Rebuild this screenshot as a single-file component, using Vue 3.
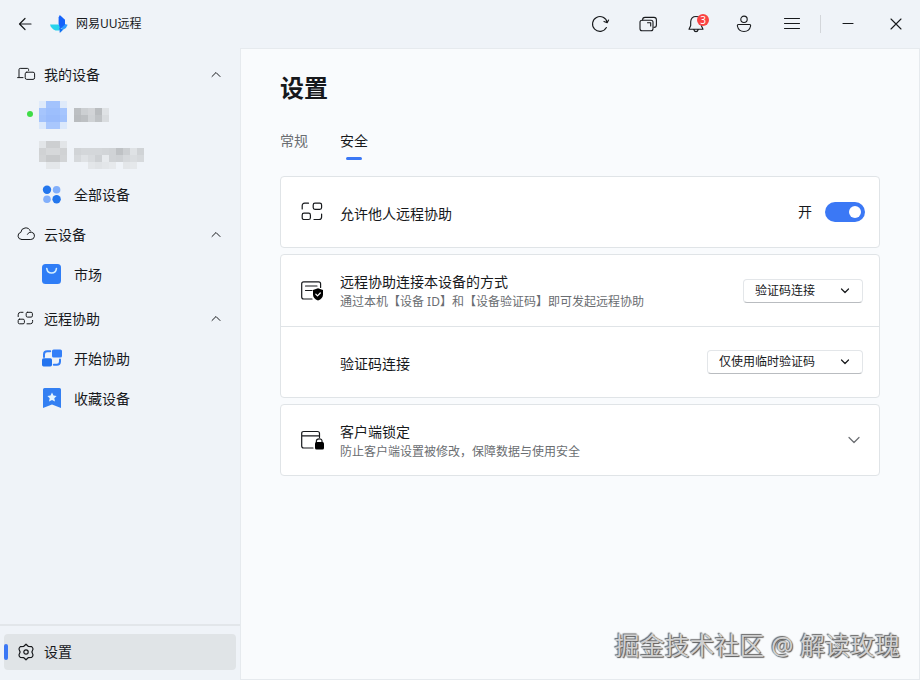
<template>
  <div class="app">
    <header class="titlebar">
      <button class="icon-btn back" aria-label="返回">
        <svg width="16" height="16" viewBox="0 0 16 16"><path d="M14 8H2.5M8 2.5L2.5 8L8 13.5" /></svg>
      </button>
      <svg class="logo" width="18" height="18" viewBox="0 0 18 18">
        <path d="M0 9.4L8.5 9.6L11 13L8.8 15.4H5.5Q1 13.5 0 9.4Z" fill="#27d3ec" />
        <path d="M13 8.5L17.6 9.8Q16.6 13.4 13.5 14.6L10.5 13Z" fill="#2f9bff" />
        <path d="M9.8 0L15 4.8V9.5L10.2 14L8.6 9V2.5Z" fill="#1562fa" />
        <path d="M9.2 13L13.4 14.4L9.8 18Z" fill="#1273f2" />
      </svg>
      <span class="app-name">网易UU远程</span>
      <div class="actions">
        <button class="icon-btn" aria-label="刷新">
          <svg width="20" height="20" viewBox="0 0 20 20"><path d="M16.4 13.6A7.4 7.4 0 1 1 17.2 8.6M14 7.4L17.2 8.8L18.6 6" /></svg>
        </button>
        <button class="icon-btn" aria-label="窗口">
          <svg width="20" height="20" viewBox="0 0 20 20">
            <rect x="2" y="6.3" width="13" height="10.5" rx="2" />
            <path d="M4.6 5.9Q4.6 3.4 7 3.4H16Q18.4 3.4 18.4 5.8V11Q18.4 13.4 16 13.4M9.5 8.8H12.7V12" />
          </svg>
        </button>
        <button class="icon-btn" aria-label="通知">
          <svg width="20" height="20" viewBox="0 0 20 20"><path d="M4.7 9V7.8Q5 2.5 10 2.5T15.3 7.8V11.5L17 15.3H3L4.7 11.5ZM7.8 15.5Q8.3 17.6 10 17.6T12.2 15.5" /></svg>
          <span class="badge">3</span>
        </button>
        <button class="icon-btn" aria-label="账号">
          <svg width="20" height="20" viewBox="0 0 20 20">
            <circle cx="10" cy="5.3" r="3.2" />
            <path d="M4.5 10.5H15.5Q16.8 10.5 16.6 12Q15.5 17.5 10 17.5T3.4 12Q3.2 10.5 4.5 10.5Z" />
          </svg>
        </button>
        <button class="icon-btn" aria-label="菜单">
          <svg width="20" height="20" viewBox="0 0 20 20"><path d="M2.5 4.5H17.5M2.5 9.5H17.5M2.5 14.5H17.5" /></svg>
        </button>
        <span class="split"></span>
        <button class="icon-btn" aria-label="最小化">
          <svg width="20" height="20" viewBox="0 0 20 20"><path d="M5 9.5H15" /></svg>
        </button>
        <button class="icon-btn" aria-label="关闭">
          <svg width="20" height="20" viewBox="0 0 20 20"><path d="M5 5L15 15M15 5L5 15" /></svg>
        </button>
      </div>
    </header>

    <div class="body">
      <aside class="sidebar">
        <nav>
          <section v-for="group in groups" :key="group.name" class="group">
            <button class="group-head">
              <svg v-if="group.icon === 'devices'" width="20" height="20" viewBox="0 0 20 20">
                <path d="M1.6 12.6H7M3 12V4.6Q3 3.4 4.2 3.4H11.4Q12.6 3.4 12.6 4.6V5.4" />
                <rect x="9.2" y="7.2" width="9.4" height="7.2" rx="1.6" />
              </svg>
              <svg v-else-if="group.icon === 'cloud'" width="20" height="20" viewBox="0 0 20 20">
                <path d="M5.5 14.5H14.8A3.7 3.7 0 1 0 11.4 9.3M5.5 14.5A3.6 3.6 0 0 1 4.8 7.4A5 5 0 0 1 14.4 6" />
              </svg>
              <svg v-else width="20" height="20" viewBox="0 0 20 20">
                <path d="M2.2 7.6V5.7Q2.2 3.3 4.6 3.3H7M16.6 11.4V12.6Q16.6 14.8 14.4 14.8H11" />
                <rect x="10.2" y="3.3" width="6.2" height="4.8" rx="1.3" />
                <rect x="2.2" y="10.2" width="6.2" height="4.6" rx="1.3" />
              </svg>
              <span>{{ group.name }}</span>
              <svg class="chevron" width="10" height="10" viewBox="0 0 10 10"><path d="M1 6.5L5 2.5L9 6.5" /></svg>
            </button>
            <a v-for="item in group.items" :key="item.icon" class="item" href="#">
              <i v-if="item.online" class="online"></i>
              <svg v-if="item.avatar" class="mosaic" width="28" height="28">
                <rect v-for="c in cells(item.avatar)" :key="c.key" :x="c.x" :y="c.y" width="7" height="7" :fill="c.fill" />
              </svg>
              <svg v-else-if="item.icon === 'all'" width="20" height="20" viewBox="0 0 20 20">
                <circle cx="5" cy="4.8" r="4.2" fill="#2376ed" />
                <circle cx="14.6" cy="4.8" r="3.8" fill="#82affb" />
                <circle cx="5" cy="14.2" r="3.8" fill="#82affb" />
                <circle cx="14.6" cy="14.2" r="4.2" fill="#2376ed" />
              </svg>
              <svg v-else-if="item.icon === 'market'" width="20" height="20" viewBox="0 0 20 20">
                <rect x="0" y="-1" width="19" height="20" rx="3.5" fill="#2f7df6" />
                <path class="smile" d="M4.8 3.5Q5.3 8 9.6 8T14.4 3.5" />
              </svg>
              <svg v-else-if="item.icon === 'assist'" width="20" height="20" viewBox="0 0 20 20">
                <rect x="10" y="0.5" width="10" height="8" rx="1.6" fill="#347ff7" />
                <rect x="0" y="9.2" width="10" height="8.2" rx="1.6" fill="#2474ef" />
                <path class="line" d="M2 8V5.4Q2 2.2 5.2 2.2H8.2M18 10.4V12.6Q18 15.8 14.8 15.8H11.8" />
              </svg>
              <svg v-else width="20" height="20" viewBox="0 0 20 20">
                <path d="M1 0.5Q1 -1 2.5 -1H17.5Q19 -1 19 0.5V19L10 15.5L1 19Z" fill="#337ff2" />
                <path d="M10 3.5L11.5 6.5L14.6 7L12.3 9.2L13 12.5L10 10.9L7 12.5L7.7 9.2L5.4 7L8.5 6.5Z" fill="#e3f5ff" />
              </svg>
              <svg v-if="item.mask" :width="item.mask[0].length * 7" :height="item.mask.length * 7">
                <rect v-for="c in cells(item.mask)" :key="c.key" :x="c.x" :y="c.y" width="7" height="7" :fill="c.fill" />
              </svg>
              <span v-else>{{ item.name }}</span>
            </a>
          </section>
        </nav>
        <div class="side-foot">
          <a class="settings" href="#">
            <svg width="18" height="18" viewBox="0 0 18 18">
              <path d="M9 1.2L11.2 3.3L14.7 3.6Q16 4.7 16 6.1L14.9 9L16 11.9Q16 13.3 14.7 14.4L11.2 14.7L9 16.8L6.8 14.7L3.3 14.4Q2 13.3 2 11.9L3.1 9L2 6.1Q2 4.7 3.3 3.6L6.8 3.3Z" />
              <circle cx="9" cy="9" r="2.2" />
            </svg>
            <span>设置</span>
          </a>
        </div>
      </aside>

      <main class="main">
        <h1>设置</h1>
        <div class="tabs">
          <button v-for="t in tabs" :key="t" class="tab" :class="{ active: t === tab }" @click="tab = t">{{ t }}</button>
        </div>

        <div class="card">
          <div class="row switch-row">
            <svg width="24" height="24" viewBox="0 0 24 24">
              <path d="M2.2 9V5.7Q2.2 3.2 4.7 3.2H8.5M21.6 14V17Q21.6 19.5 19.1 19.5H14" />
              <rect x="13.2" y="3.2" width="8.4" height="6.2" rx="1.8" />
              <rect x="2.2" y="13.2" width="8.2" height="6.3" rx="1.8" />
            </svg>
            <label class="text" for="allow">允许他人远程协助</label>
            <span class="state">{{ allow ? '开' : '关' }}</span>
            <input id="allow" v-model="allow" class="switch" type="checkbox" role="switch">
          </div>
        </div>

        <div class="card">
          <div class="row divided">
            <svg width="24" height="24" viewBox="0 0 24 24">
              <path d="M12 20H3.7Q1.7 20 1.7 18V4.8Q1.7 2.8 3.7 2.8H18.6Q20.6 2.8 20.6 4.8V8.5M5.5 7H17M5.5 11.5H12" />
              <path class="solid" d="M18 9.2L23 11V15.5Q23 19.5 18 21.6Q13 19.5 13 15.5V11Z" />
              <path class="check" d="M15.8 15.2L17.5 16.9L20.3 14" />
            </svg>
            <div class="text">
              <label for="mode">远程协助连接本设备的方式</label>
              <p>通过本机【设备 ID】和【设备验证码】即可发起远程协助</p>
            </div>
            <div class="select">
              <select id="mode"><option>验证码连接</option></select>
              <svg width="10" height="10" viewBox="0 0 10 10"><path d="M1.5 3L5 6.5L8.5 3" /></svg>
            </div>
          </div>
          <div class="row">
            <span class="no-icon"></span>
            <label class="text" for="code">验证码连接</label>
            <div class="select">
              <select id="code"><option>仅使用临时验证码</option></select>
              <svg width="10" height="10" viewBox="0 0 10 10"><path d="M1.5 3L5 6.5L8.5 3" /></svg>
            </div>
          </div>
        </div>

        <div class="card">
          <div class="row">
            <svg width="24" height="24" viewBox="0 0 24 24">
              <path d="M13 20H3.7Q1.7 20 1.7 18V5.5Q1.7 3.5 3.7 3.5H17.5Q19.5 3.5 19.5 5.5V9.5M1.7 7.8H19.5" />
              <path d="M16.4 15V13Q16.4 10.8 19.2 10.8T22 13V15" />
              <rect class="solid" x="15" y="14" width="9" height="7.5" rx="1.5" />
            </svg>
            <div class="text">
              <span>客户端锁定</span>
              <p>防止客户端设置被修改，保障数据与使用安全</p>
            </div>
            <button class="expand" aria-label="展开">
              <svg width="12" height="12" viewBox="0 0 12 12"><path d="M1 3.5L6 8.5L11 3.5" /></svg>
            </button>
          </div>
        </div>
      </main>
    </div>
    <div class="watermark">掘金技术社区 @ 解读玫瑰</div>
  </div>
</template>

<script setup>
import { ref } from 'vue'

const tabs = ['常规', '安全']
const tab = ref('安全')
const allow = ref(true)

const groups = [
  {
    name: '我的设备',
    icon: 'devices',
    items: [
      {
        icon: 'pc1',
        online: true,
        avatar: [
          ['#dfeafa', '#a3c3fd', '#a3c3fd', '#dfeafa'],
          ['#a6c5fd', '#9dbffd', '#9dbffd', '#a6c5fd'],
          ['#a2c2fc', '#9abcfc', '#9abcfc', '#a2c2fc'],
          ['#dbe8fb', '#a9c7fd', '#a9c7fd', '#dbe8fb']
        ],
        mask: [
          ['#bcbfc2', '#cccfd2', '#d2d4d7', '#babdc0', '#dfe2e5'],
          ['#b9bcbf', '#bdc0c3', '#cfd2d5', '#c0c3c6', '#d9dcdf']
        ]
      },
      {
        icon: 'pc2',
        avatar: [
          ['#e2e5e8', '#cdcfd1', '#cdcfd1', '#e2e5e8'],
          ['#d0d2d4', '#d6d8da', '#d6d8da', '#d0d2d4'],
          ['#d2d4d6', '#c8cacc', '#c8cacc', '#d2d4d6'],
          ['#eff3f8', '#e4e7ea', '#e4e7ea', '#eff3f8']
        ],
        mask: [
          Array(10).fill('none'),
          ['#d1d4d7', '#d4d7da', '#d4d7da', '#d4d7da', '#d2d5d8', '#d0d3d6', '#bfc2c5', '#cccfd2', '#dfe2e5', '#d0d3d6'],
          ['#d6d9dc', '#dfe2e5', '#d8dbde', '#ced1d4', '#e7eaed', '#d0d3d6', '#ced1d4', '#d6d9dc', '#dadde0', '#d6d9dc'],
          ['none', 'none', '#e3e6e9', '#e0e3e6', '#e3e6e9', '#e6e9ec', 'none', '#e3e6e9', '#e5e8eb', 'none']
        ]
      },
      { icon: 'all', name: '全部设备' }
    ]
  },
  { name: '云设备', icon: 'cloud', items: [{ icon: 'market', name: '市场' }] },
  {
    name: '远程协助',
    icon: 'remote',
    items: [
      { icon: 'assist', name: '开始协助' },
      { icon: 'favorite', name: '收藏设备' }
    ]
  }
]

// turns a colour matrix into 7px squares
const cells = (rows) =>
  rows.flatMap((row, y) => row.map((fill, x) => ({ key: `${x}-${y}`, x: x * 7, y: y * 7, fill })))
</script>

<style>
body {
  margin: 0;
}
</style>

<style scoped>
* {
  box-sizing: border-box;
}

.app {
  position: relative;
  display: flex;
  flex-direction: column;
  min-height: 100vh;
  background: #eff3f8;
  color: #17191c;
  font: 14px/20px "Noto Sans", "Noto Sans CJK SC", sans-serif;
}

button {
  padding: 0;
  border: 0;
  background: none;
  color: inherit;
  font: inherit;
}

a {
  color: inherit;
  text-decoration: none;
}

svg {
  flex: none;
  overflow: visible;
  fill: none;
  stroke: #17191c;
  stroke-width: 1.2;
  stroke-linecap: round;
  stroke-linejoin: round;
}

.titlebar {
  display: flex;
  align-items: center;
  height: 48px;
  padding: 0 12px 0 16px;
}

.icon-btn {
  position: relative;
  display: flex;
  align-items: center;
  justify-content: center;
  width: 24px;
  height: 24px;
}

.back {
  width: 18px;
}

.logo {
  margin: 0 8px 0 16px;
}

.logo path,
.item svg {
  stroke: none;
}

.app-name {
  font-size: 12px;
}

.actions {
  display: flex;
  align-items: center;
  gap: 24px;
  margin-left: auto;
}

.actions svg {
  stroke-width: 1.1;
}

.badge {
  position: absolute;
  top: 2px;
  right: -1px;
  width: 12px;
  height: 12px;
  border-radius: 6px;
  background: #fa4343;
  color: #fff;
  font-size: 10px;
  line-height: 12px;
  text-align: center;
}

.split {
  width: 1px;
  height: 18px;
  margin: 0 -9px 0 -8px;
  background: #d3d6da;
}

.body {
  display: flex;
  flex: 1;
}

.sidebar {
  display: flex;
  flex-direction: column;
  justify-content: space-between;
  width: 240px;
  padding-top: 7px;
}

.group:last-child {
  margin-top: 4px;
}

.group-head {
  display: flex;
  align-items: center;
  gap: 8px;
  width: 100%;
  height: 40px;
  padding: 0 19px 0 16px;
}

.group-head svg {
  stroke-width: 1;
}

.chevron {
  margin-left: auto;
}

.item {
  position: relative;
  display: flex;
  align-items: center;
  gap: 12px;
  height: 40px;
  padding-left: 42px;
}

.item .mosaic {
  margin: 0 -5px 0 -3px;
}

.item .line {
  stroke: #347ff7;
  stroke-width: 2;
}

.item .smile {
  stroke: #d5f0ff;
  stroke-width: 1.6;
}

.online {
  position: absolute;
  left: 27px;
  top: 16px;
  width: 6px;
  height: 6px;
  border-radius: 3px;
  background: #3fdc47;
}

.side-foot {
  padding: 8px 4px 10px;
  border-top: 2px solid #e2e6ea;
}

.settings {
  position: relative;
  display: flex;
  align-items: center;
  gap: 9px;
  height: 36px;
  padding-left: 13px;
  border-radius: 4px;
  background: #e0e4e7;
}

.settings::before {
  content: "";
  position: absolute;
  left: 0;
  top: 10px;
  width: 4px;
  height: 16px;
  border-radius: 2px;
  background: #3b78f5;
}

.main {
  flex: 1;
  padding: 24px 40px;
  background: #f9fbfd;
  box-shadow: inset 0 0 0 1px #e6eaee;
}

h1 {
  margin: 0 0 27px;
  font-size: 24px;
  line-height: 32px;
}

.tabs {
  display: flex;
  gap: 32px;
  margin-bottom: 16px;
}

.tab {
  color: #6a6d71;
}

.tab::after {
  content: "";
  display: block;
  width: 16px;
  height: 3px;
  margin: 6px auto 0;
  border-radius: 2px;
}

.tab.active {
  color: #17191c;
}

.tab.active::after {
  background: #3b78f5;
}

.card {
  margin-bottom: 6px;
  border: 1px solid #e0e4e7;
  border-radius: 4px;
  background: #fff;
}

.row {
  display: flex;
  align-items: center;
  min-height: 70px;
  padding: 0 16px 0 19px;
}

.switch-row {
  padding-right: 14px;
}

.divided {
  min-height: 72px;
  border-bottom: 1px solid #e0e4e7;
}

.row .solid {
  fill: #000;
  stroke: none;
}

.check {
  stroke: #fff;
}

.no-icon {
  width: 24px;
}

.text {
  flex: 1;
  margin-left: 16px;
  padding-top: 3px;
}

.text p {
  margin: 0;
  color: #6a6d71;
  font-size: 12px;
}

.state {
  margin-right: 13px;
}

.switch {
  appearance: none;
  width: 40px;
  height: 20px;
  margin: 0;
  padding: 4px;
  border-radius: 10px;
  background: #a9adb2;
}

.switch::before {
  content: "";
  display: block;
  width: 12px;
  height: 12px;
  border-radius: 6px;
  background: #fff;
}

.switch:checked {
  background: #3b78f5;
}

.switch:checked::before {
  margin-left: auto;
}

.select {
  position: relative;
}

.select select {
  display: block;
  appearance: none;
  height: 24px;
  padding: 0 46px 0 11px;
  border: 1px solid #e3e6e9;
  border-bottom-color: #b9bcc0;
  border-radius: 4px;
  background: #fff;
  color: inherit;
  font: inherit;
  font-size: 12px;
}

.select svg {
  position: absolute;
  top: 7px;
  right: 13px;
  pointer-events: none;
}

.expand {
  display: flex;
  padding: 3px;
}

.expand svg {
  stroke: #6a6d71;
}

.watermark {
  position: absolute;
  right: 20px;
  bottom: 17px;
  color: #d0d0d0;
  font-size: 25px;
  line-height: 36px;
  text-shadow: -1px -1px 1px #666, 1px 1px 1px #555;
  pointer-events: none;
}
</style>
